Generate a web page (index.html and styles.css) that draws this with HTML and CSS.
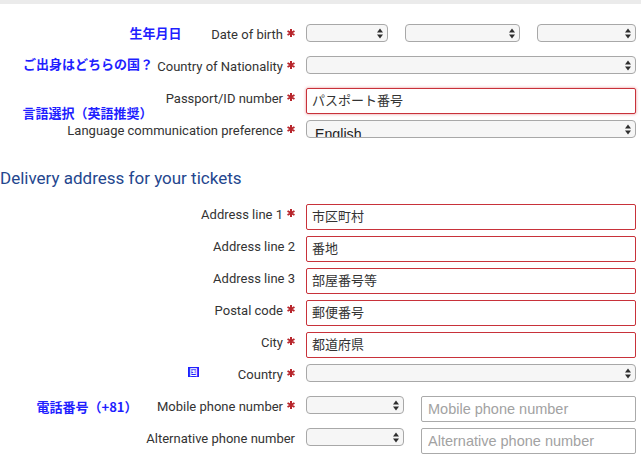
FILE: index.html
```html
<!DOCTYPE html>
<html lang="en">
<head>
<meta charset="utf-8">
<title>Passenger details</title>
<link rel="stylesheet" href="styles.css">
</head>
<body>
<div class="topbar"></div>
<form class="form">
  <div class="row">
    <span class="note note-dob">生年月日</span>
    <label class="label">Date of birth<svg class="req" viewBox="0 0 8 8"><path d="M4 0V8M0.54 2L7.46 6M0.54 6L7.46 2"/></svg></label>
    <div class="ctrl dob">
      <div class="sel"><select aria-label="Day"><option></option></select><svg class="arr" viewBox="0 0 6 11"><path d="M0 4.5L3 0.5L6 4.5ZM0 6.5L3 10.5L6 6.5Z"/></svg></div>
      <div class="sel"><select aria-label="Month"><option></option></select><svg class="arr" viewBox="0 0 6 11"><path d="M0 4.5L3 0.5L6 4.5ZM0 6.5L3 10.5L6 6.5Z"/></svg></div>
      <div class="sel"><select aria-label="Year"><option></option></select><svg class="arr" viewBox="0 0 6 11"><path d="M0 4.5L3 0.5L6 4.5ZM0 6.5L3 10.5L6 6.5Z"/></svg></div>
    </div>
  </div>
  <div class="row">
    <span class="note note-nat">ご出身はどちらの国？</span>
    <label class="label">Country of Nationality<svg class="req" viewBox="0 0 8 8"><path d="M4 0V8M0.54 2L7.46 6M0.54 6L7.46 2"/></svg></label>
    <div class="ctrl">
      <div class="sel"><select aria-label="Country of Nationality"><option></option></select><svg class="arr" viewBox="0 0 6 11"><path d="M0 4.5L3 0.5L6 4.5ZM0 6.5L3 10.5L6 6.5Z"/></svg></div>
    </div>
  </div>
  <div class="row">
    <label class="label">Passport/ID number<svg class="req" viewBox="0 0 8 8"><path d="M4 0V8M0.54 2L7.46 6M0.54 6L7.46 2"/></svg></label>
    <div class="ctrl"><input class="inp err glow" type="text" value="パスポート番号" aria-label="Passport/ID number"></div>
  </div>
  <div class="row">
    <span class="note note-lang">言語選択（英語推奨）</span>
    <label class="label">Language communication preference<svg class="req" viewBox="0 0 8 8"><path d="M4 0V8M0.54 2L7.46 6M0.54 6L7.46 2"/></svg></label>
    <div class="ctrl">
      <div class="sel"><select class="lang" aria-label="Language"><option>English</option></select><svg class="arr" viewBox="0 0 6 11"><path d="M0 4.5L3 0.5L6 4.5ZM0 6.5L3 10.5L6 6.5Z"/></svg></div>
    </div>
  </div>

  <h2 class="section">Delivery address for your tickets</h2>

  <div class="row">
    <label class="label">Address line 1<svg class="req" viewBox="0 0 8 8"><path d="M4 0V8M0.54 2L7.46 6M0.54 6L7.46 2"/></svg></label>
    <div class="ctrl"><input class="inp err" type="text" value="市区町村" aria-label="Address line 1"></div>
  </div>
  <div class="row">
    <label class="label">Address line 2</label>
    <div class="ctrl"><input class="inp err" type="text" value="番地" aria-label="Address line 2"></div>
  </div>
  <div class="row">
    <label class="label">Address line 3</label>
    <div class="ctrl"><input class="inp err" type="text" value="部屋番号等" aria-label="Address line 3"></div>
  </div>
  <div class="row">
    <label class="label">Postal code<svg class="req" viewBox="0 0 8 8"><path d="M4 0V8M0.54 2L7.46 6M0.54 6L7.46 2"/></svg></label>
    <div class="ctrl"><input class="inp err" type="text" value="郵便番号" aria-label="Postal code"></div>
  </div>
  <div class="row">
    <label class="label">City<svg class="req" viewBox="0 0 8 8"><path d="M4 0V8M0.54 2L7.46 6M0.54 6L7.46 2"/></svg></label>
    <div class="ctrl"><input class="inp err" type="text" value="都道府県" aria-label="City"></div>
  </div>
  <div class="row">
    <span class="note note-country">国</span>
    <label class="label">Country<svg class="req" viewBox="0 0 8 8"><path d="M4 0V8M0.54 2L7.46 6M0.54 6L7.46 2"/></svg></label>
    <div class="ctrl">
      <div class="sel"><select aria-label="Country"><option></option></select><svg class="arr" viewBox="0 0 6 11"><path d="M0 4.5L3 0.5L6 4.5ZM0 6.5L3 10.5L6 6.5Z"/></svg></div>
    </div>
  </div>
  <div class="row">
    <span class="note note-tel">電話番号（+81）</span>
    <label class="label">Mobile phone number<svg class="req" viewBox="0 0 8 8"><path d="M4 0V8M0.54 2L7.46 6M0.54 6L7.46 2"/></svg></label>
    <div class="ctrl phone">
      <div class="sel"><select aria-label="Mobile country code"><option></option></select><svg class="arr" viewBox="0 0 6 11"><path d="M0 4.5L3 0.5L6 4.5ZM0 6.5L3 10.5L6 6.5Z"/></svg></div>
      <input class="inp plain" type="text" placeholder="Mobile phone number" aria-label="Mobile phone number">
    </div>
  </div>
  <div class="row">
    <label class="label">Alternative phone number</label>
    <div class="ctrl phone">
      <div class="sel"><select aria-label="Alternative country code"><option></option></select><svg class="arr" viewBox="0 0 6 11"><path d="M0 4.5L3 0.5L6 4.5ZM0 6.5L3 10.5L6 6.5Z"/></svg></div>
      <input class="inp plain" type="text" placeholder="Alternative phone number" aria-label="Alternative phone number">
    </div>
  </div>
</form>
</body>
</html>
```
FILE: styles.css
```css
html, body {
  margin: 0;
  padding: 0;
  background: #ffffff;
}

body {
  font-family: Roboto, "Liberation Sans", sans-serif;
  color: #333333;
}

.topbar {
  height: 4px;
  background: #ebebeb;
}

.form {
  padding: 20px 5px 0 0;
  margin: 0;
}

.row {
  position: relative;
  display: grid;
  grid-template-columns: 295px 330px;
  column-gap: 11px;
  align-items: start;
  height: 26px;
  margin-bottom: 6px;
}

.label {
  display: flex;
  justify-content: flex-end;
  align-items: flex-start;
  padding-top: 1px;
  font-size: 13px;
  line-height: 20px;
  color: #333333;
  white-space: nowrap;
}

.req {
  width: 8px;
  height: 8px;
  margin: 3.5px 0 0 4px;
  flex: none;
  stroke: #b8262c;
  stroke-width: 2;
  fill: none;
}

.ctrl {
  min-width: 0;
}

.dob {
  display: grid;
  grid-template-columns: 82px 115px 1fr;
  column-gap: 17px;
}

.phone {
  display: grid;
  grid-template-columns: 98px 1fr;
  column-gap: 17px;
  align-items: start;
}

.sel {
  position: relative;
  height: 18px;
}

.sel select {
  -webkit-appearance: none;
  appearance: none;
  display: block;
  box-sizing: border-box;
  width: 100%;
  height: 18px;
  margin: 0;
  padding: 0 20px 0 8px;
  border: 1px solid #a8a8a8;
  border-radius: 4px;
  background: #f6f6f6;
  font-family: "Liberation Sans", Arial, sans-serif;
  font-size: 14px;
  color: #222222;
  outline: none;
}

.sel select.lang {
  padding-top: 5px;
  line-height: 16px;
  font-size: 14.2px;
}

.arr {
  position: absolute;
  right: 5px;
  top: 3.5px;
  width: 6px;
  height: 11px;
  fill: #2e2e2e;
  pointer-events: none;
}

.inp {
  display: block;
  box-sizing: border-box;
  width: 100%;
  height: 26px;
  margin: 0;
  padding: 0 5px 4px 5px;
  border: 1px solid #aaaaaa;
  border-radius: 2px;
  background: #ffffff;
  font-family: "Liberation Sans", "Noto Sans CJK JP", sans-serif;
  font-size: 13px;
  color: #333333;
  outline: none;
}

.inp.err {
  border-color: #c8323a;
}

.inp.glow {
  box-shadow: 0 0 3px rgba(214, 40, 50, 0.55);
}

.inp.plain {
  padding: 0 5px 0 6px;
  font-size: 14.5px;
}

.inp.plain::placeholder {
  color: #a2a2a2;
}

.section {
  margin: 20px 0 14px 0;
  font-family: Roboto, "Liberation Sans", sans-serif;
  font-size: 17px;
  line-height: 24px;
  font-weight: 400;
  color: #24468e;
}

.note {
  position: absolute;
  font-family: "Noto Sans CJK JP", sans-serif;
  font-size: 13px;
  line-height: 13px;
  font-weight: 700;
  color: #1f1fff;
  white-space: nowrap;
}

.note-dob {
  left: 129.5px;
  top: 1.6px;
}

.note-nat {
  left: 23px;
  top: 1px;
}

.note-lang {
  left: 22.5px;
  top: -14px;
}

.note-tel {
  left: 36.5px;
  top: 3.6px;
}

.note-country {
  left: 188px;
  top: 3px;
  width: 11px;
  height: 10px;
  background: #2020ff;
  color: #ffffff;
  font-size: 8px;
  line-height: 10px;
  text-align: center;
}
```
